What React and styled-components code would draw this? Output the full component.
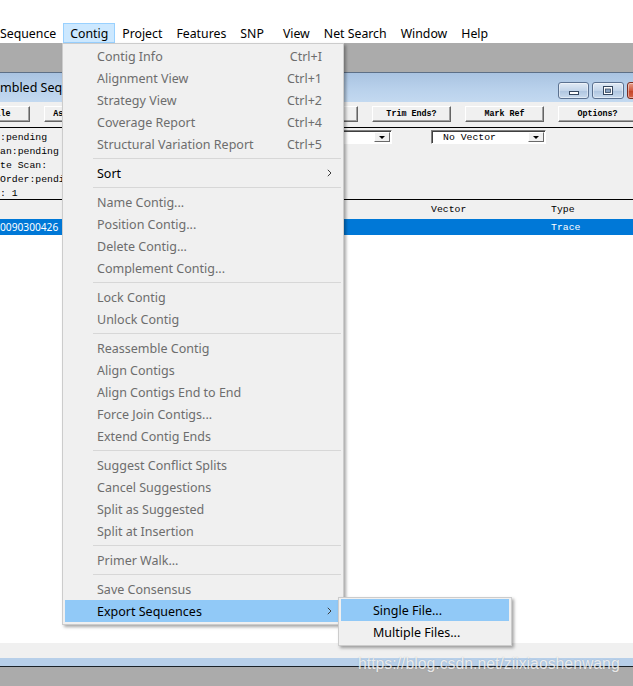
import React from "react";
import styled, { createGlobalStyle, css } from "styled-components";

const GlobalStyle = createGlobalStyle`
  html, body {
    margin: 0;
    padding: 0;
    background: #fff;
  }
  body {
    width: 633px;
    height: 686px;
    overflow: hidden;
  }
`;

const UI_FONT = `"Noto Sans", "Noto Sans CJK SC", sans-serif`;
const APP_FONT = `"Liberation Mono", "DejaVu Sans Mono", monospace`;

const Screen = styled.div`
  position: relative;
  width: 633px;
  height: 686px;
  overflow: hidden;
  display: flex;
  flex-direction: column;
  background: #fff;
  font-family: ${UI_FONT};
`;

const TopStrip = styled.div`
  height: 21px;
  flex-shrink: 0;
`;

const MenuBar = styled.nav`
  display: flex;
  height: 22px;
  padding-top: 2px;
  box-sizing: border-box;
  margin-left: -7px;
  flex-shrink: 0;
  background: #fff;
`;

const MenuBarItem = styled.div`
  height: 20px;
  box-sizing: border-box;
  padding: 0 6px;
  margin-right: ${(p) => p.$extra || 0}px;
  display: flex;
  align-items: center;
  font-size: 12.3px;
  color: #000;
  border: 1px solid transparent;
  ${(p) =>
    p.$open &&
    css`
      background: #cce8ff;
      border-color: #99d1ff;
    `}
`;

const Desktop = styled.div`
  flex: 1;
  background: #ababab;
  padding-top: 29px;
  overflow: hidden;
`;

const ChildWindow = styled.div`
  width: 680px;
  height: 595px;
  box-sizing: border-box;
  display: flex;
  flex-direction: column;
  border-top: 1px solid #5d6f86;
  border-bottom: 1px solid #1b2228;
  background: #f0f0f0;
`;

const TitleBar = styled.div`
  height: 29px;
  flex-shrink: 0;
  display: flex;
  align-items: center;
  padding-right: 6px;
  background: linear-gradient(#a9c3e1, #bad2ec 60%, #c3d9f0);
`;

const Title = styled.div`
  flex: 1;
  font-size: 12.5px;
  color: #000;
`;

const CaptionButtons = styled.div`
  display: flex;
  gap: 3px;
  align-self: flex-end;
  margin-bottom: 3px;
`;

const CaptionButton = styled.div`
  width: ${(p) => p.$w}px;
  height: 17px;
  box-sizing: border-box;
  border: 1px solid ${(p) => (p.$close ? "#7a2c1f" : "#5b7190")};
  border-radius: 3px;
  display: flex;
  align-items: center;
  justify-content: center;
  background: ${(p) =>
    p.$close
      ? "linear-gradient(#e6a08c, #d0583d 50%, #c23f24 50%, #d6664a)"
      : "linear-gradient(#e1eaf5, #c3d5ea 50%, #adc4df 50%, #c9dbee)"};
  box-shadow: inset 0 0 0 1px rgba(255, 255, 255, 0.45);
`;

const Toolbar = styled.div`
  height: 26px;
  flex-shrink: 0;
  box-sizing: border-box;
  padding-top: 4px;
  border-bottom: 1px solid #000;
  display: flex;
  align-items: flex-start;
  gap: 14px;
  margin-left: -49px;
`;

const ToolButton = styled.div`
  width: ${(p) => p.$w}px;
  height: 16px;
  flex-shrink: 0;
  box-sizing: border-box;
  border: 1px solid;
  border-color: #fff #646464 #646464 #fff;
  box-shadow: inset -1px -1px #a0a0a0;
  display: flex;
  align-items: center;
  justify-content: center;
  font-family: ${APP_FONT};
  font-weight: bold;
  font-size: 8.4px;
  color: #000;
  white-space: nowrap;
`;

const InfoArea = styled.div`
  height: 72px;
  flex-shrink: 0;
  box-sizing: border-box;
  border-bottom: 1px solid #000;
  padding-top: 2px;
  display: flex;
  align-items: flex-start;
`;

const StatusLines = styled.div`
  width: 250px;
  margin-top: 1px;
  font-family: ${APP_FONT};
  font-size: 9.8px;
  line-height: 14px;
  color: #000;
  white-space: nowrap;
`;

const Combo = styled.div`
  width: ${(p) => p.$w}px;
  margin-left: ${(p) => p.$gap || 0}px;
  height: 14px;
  box-sizing: border-box;
  border: 1px solid;
  border-color: #808080 #fff #fff #808080;
  box-shadow: inset 1px 1px #404040;
  background: #fff;
  display: flex;
  align-items: center;
  padding-left: 11px;
  font-family: ${APP_FONT};
  font-size: 9.8px;
  color: #000;
`;

const ComboText = styled.span`
  flex: 1;
`;

const ComboArrow = styled.div`
  width: 16px;
  height: 10px;
  margin-right: 1px;
  box-sizing: border-box;
  border: 1px solid;
  border-color: #fff #696969 #696969 #fff;
  background: #f0f0f0;
  display: flex;
  align-items: center;
  justify-content: center;

  &::after {
    content: "";
    border-left: 3px solid transparent;
    border-right: 3px solid transparent;
    border-top: 3px solid #000;
  }
`;

const GridRow = styled.div`
  display: grid;
  grid-template-columns: 431px 120px 1fr;
  align-items: center;
  flex-shrink: 0;
  font-family: ${APP_FONT};
  font-size: 9.8px;
  white-space: nowrap;
`;

const HeaderRow = styled(GridRow)`
  height: 19px;
  color: #000;
`;

const DataRow = styled(GridRow)`
  height: 16px;
  background: ${(p) => (p.$selected ? "#0078d7" : "#fff")};
  color: ${(p) => (p.$selected ? "#fff" : "#000")};
`;

const SeqName = styled.span`
  font-family: ${UI_FONT};
  font-size: 10.2px;
`;

const ListBody = styled.div`
  flex: 1;
  background: #fff;
`;

const StatusBar = styled.div`
  height: 15px;
  flex-shrink: 0;
  background: #f0f0f0;
`;

const BottomFrame = styled.div`
  height: 8px;
  flex-shrink: 0;
  background: #b7cfe9;
`;

/* popup menus */

const Popup = styled.div`
  position: absolute;
  left: ${(p) => p.$x}px;
  top: ${(p) => p.$y}px;
  width: ${(p) => p.$w}px;
  box-sizing: border-box;
  padding: 1px 2px 2px;
  background: #f0f0f0;
  border: 1px solid #cccccc;
  box-shadow: 2px 2px 3px rgba(0, 0, 0, 0.35);
  font-family: ${UI_FONT};
  font-size: 12.5px;
  z-index: ${(p) => p.$z || 10};
`;

const Item = styled.div`
  height: 22px;
  display: flex;
  align-items: center;
  padding-left: ${(p) => p.$indent}px;
  color: ${(p) => (p.$disabled ? "#6d6d6d" : "#000")};
  background: ${(p) => (p.$active ? "#91c9f7" : "transparent")};
  white-space: nowrap;
`;

const ItemLabel = styled.span`
  flex: 1;
`;

const ItemKey = styled.span`
  text-align: right;
`;

const ItemArrow = styled.span`
  width: 19px;
  padding-right: 5px;
  box-sizing: border-box;
  display: flex;
  justify-content: center;
`;

const Separator = styled.div`
  height: 7px;
  margin-left: 28px;
  display: flex;
  align-items: center;

  &::after {
    content: "";
    flex: 1;
    height: 1px;
    background: #d7d7d7;
  }
`;

const Watermark = styled.div`
  position: absolute;
  left: 358px;
  top: 655px;
  font-family: "Liberation Sans", Arial, sans-serif;
  font-size: 15.8px;
  color: rgba(255, 255, 255, 0.8);
  text-shadow: 0 0 1px rgba(120, 120, 120, 0.5);
  white-space: nowrap;
  z-index: 20;
`;

const menuBarItems = [
  { label: "Sequence" },
  { label: "Contig", open: true },
  { label: "Project" },
  { label: "Features" },
  { label: "SNP", extra: 5 },
  { label: "View" },
  { label: "Net Search" },
  { label: "Window" },
  { label: "Help" },
];

// the buttons behind the open menu keep no label: only their frames peek out
const toolButtons = [
  { id: "file", label: "Add File", w: 79 },
  { id: "assemble", label: "Assemble Now", w: 79 },
  { id: "b3", label: "", w: 79 },
  { id: "b4", label: "", w: 35 },
  { id: "b5", label: "", w: 79 },
  { id: "trim", label: "Trim Ends?", w: 79 },
  { id: "ref", label: "Mark Ref", w: 79 },
  { id: "opts", label: "Options?", w: 79 },
];

const statusLines = [":pending", "an:pending", "te Scan:", "Order:pending", ": 1"];

const contigMenu = [
  [
    { label: "Contig Info", key: "Ctrl+I" },
    { label: "Alignment View", key: "Ctrl+1" },
    { label: "Strategy View", key: "Ctrl+2" },
    { label: "Coverage Report", key: "Ctrl+4" },
    { label: "Structural Variation Report", key: "Ctrl+5" },
  ],
  [{ label: "Sort", enabled: true, sub: true }],
  [
    { label: "Name Contig..." },
    { label: "Position Contig..." },
    { label: "Delete Contig..." },
    { label: "Complement Contig..." },
  ],
  [{ label: "Lock Contig" }, { label: "Unlock Contig" }],
  [
    { label: "Reassemble Contig" },
    { label: "Align Contigs" },
    { label: "Align Contigs End to End" },
    { label: "Force Join Contigs..." },
    { label: "Extend Contig Ends" },
  ],
  [
    { label: "Suggest Conflict Splits" },
    { label: "Cancel Suggestions" },
    { label: "Split as Suggested" },
    { label: "Split at Insertion" },
  ],
  [{ label: "Primer Walk..." }],
  [
    { label: "Save Consensus" },
    { label: "Export Sequences", enabled: true, sub: true, active: true },
  ],
];

const exportMenu = [
  { label: "Single File...", active: true },
  { label: "Multiple Files..." },
];

function Chevron() {
  return (
    <svg width="5" height="8" viewBox="0 0 5 8">
      <path d="M0.8 0.8 L4 4 L0.8 7.2" fill="none" stroke="#3c3c3c" strokeWidth="1" />
    </svg>
  );
}

function MinimizeIcon() {
  return (
    <svg width="12" height="12" viewBox="0 0 12 12">
      <rect x="1.5" y="6.5" width="9" height="3" fill="#fff" stroke="#34465e" />
    </svg>
  );
}

function MaximizeIcon() {
  return (
    <svg width="12" height="12" viewBox="0 0 12 12">
      <rect x="1.5" y="1.5" width="9" height="8" fill="#fff" stroke="#34465e" />
      <rect x="3.5" y="4" width="5" height="3.5" fill="#8aa2c0" stroke="#34465e" strokeWidth="0.8" />
    </svg>
  );
}

function ContigMenu() {
  return (
    <Popup $x={62} $y={43} $w={282}>
      {contigMenu.map((group, gi) => (
        <React.Fragment key={gi}>
          {gi > 0 && <Separator />}
          {group.map((it) => (
            <Item key={it.label} $indent={32} $disabled={!it.enabled} $active={it.active}>
              <ItemLabel>{it.label}</ItemLabel>
              {it.key && <ItemKey>{it.key}</ItemKey>}
              <ItemArrow>{it.sub && <Chevron />}</ItemArrow>
            </Item>
          ))}
        </React.Fragment>
      ))}
    </Popup>
  );
}

function ExportMenu() {
  return (
    <Popup $x={338} $y={597} $w={174} $z={11}>
      {exportMenu.map((it) => (
        <Item key={it.label} $indent={32} $active={it.active}>
          <ItemLabel>{it.label}</ItemLabel>
        </Item>
      ))}
    </Popup>
  );
}

export default function App() {
  return (
    <>
      <GlobalStyle />
      <Screen>
        <TopStrip />
        <MenuBar>
          {menuBarItems.map((m) => (
            <MenuBarItem key={m.label} $open={m.open} $extra={m.extra}>
              {m.label}
            </MenuBarItem>
          ))}
        </MenuBar>

        <Desktop>
          <ChildWindow>
            <TitleBar>
              <Title>mbled Sequences</Title>
              <CaptionButtons>
                <CaptionButton $w={31}>
                  <MinimizeIcon />
                </CaptionButton>
                <CaptionButton $w={32}>
                  <MaximizeIcon />
                </CaptionButton>
                <CaptionButton $w={47} $close />
              </CaptionButtons>
            </TitleBar>

            <Toolbar>
              {toolButtons.map((b) => (
                <ToolButton key={b.id} $w={b.w}>
                  {b.label}
                </ToolButton>
              ))}
            </Toolbar>

            <InfoArea>
              <StatusLines>
                {statusLines.map((l) => (
                  <div key={l}>{l}</div>
                ))}
              </StatusLines>
              <Combo $w={142}>
                <ComboText />
                <ComboArrow />
              </Combo>
              <Combo $w={115} $gap={39}>
                <ComboText>No Vector</ComboText>
                <ComboArrow />
              </Combo>
            </InfoArea>

            <HeaderRow>
              <span />
              <span>Vector</span>
              <span>Type</span>
            </HeaderRow>
            <DataRow $selected>
              <SeqName>0090300426</SeqName>
              <span />
              <span>Trace</span>
            </DataRow>
            <ListBody />
            <StatusBar />
            <BottomFrame />
          </ChildWindow>
        </Desktop>

        <ContigMenu />
        <ExportMenu />
        <Watermark>https://blog.csdn.net/ziixiaoshenwang</Watermark>
      </Screen>
    </>
  );
}
